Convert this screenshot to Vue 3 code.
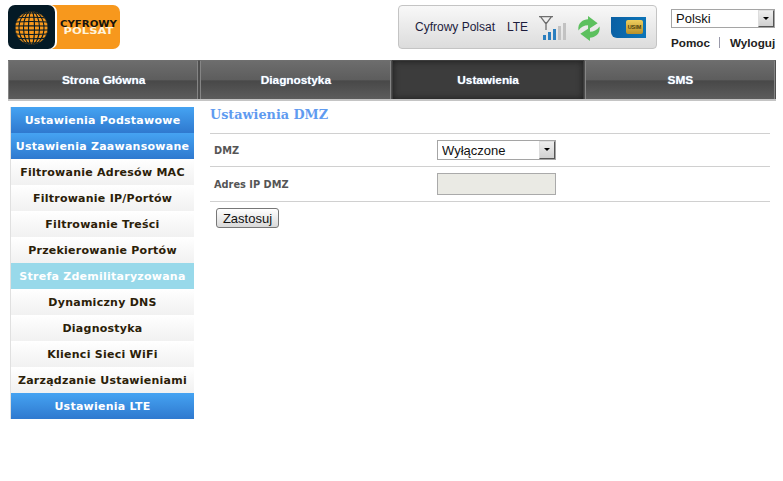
<script setup>
const tabs = [
  { label: 'Strona Główna', active: false },
  { label: 'Diagnostyka', active: false },
  { label: 'Ustawienia', active: true },
  { label: 'SMS', active: false },
]
const menu = [
  { label: 'Ustawienia Podstawowe', kind: 'blue' },
  { label: 'Ustawienia Zaawansowane', kind: 'blue' },
  { label: 'Filtrowanie Adresów MAC', kind: 'sub' },
  { label: 'Filtrowanie IP/Portów', kind: 'sub' },
  { label: 'Filtrowanie Treści', kind: 'sub' },
  { label: 'Przekierowanie Portów', kind: 'sub' },
  { label: 'Strefa Zdemilitaryzowana', kind: 'current' },
  { label: 'Dynamiczny DNS', kind: 'sub' },
  { label: 'Diagnostyka', kind: 'sub' },
  { label: 'Klienci Sieci WiFi', kind: 'sub' },
  { label: 'Zarządzanie Ustawieniami', kind: 'sub' },
  { label: 'Ustawienia LTE', kind: 'blue' },
]
const meridians = [16.5, 12.5, 8, 3]
const parallels = [-14, -10, -6, -2, 2, 6, 10, 14]
</script>

<template>
  <div class="page">
    <header class="top">
      <svg class="logo" width="112" height="44" viewBox="0 0 112 44">
        <rect x="38" y="0" width="74" height="44" rx="7" fill="#f7981d" />
        <rect x="0" y="0" width="49" height="44" rx="7" fill="#fff" />
        <rect x="0" y="0" width="47" height="44" rx="7" fill="#041a26" />
        <clipPath id="globe-clip"><circle cx="23.500" cy="23" r="16.500" /></clipPath>
        <circle cx="23.500" cy="23" r="16.500" fill="#f7981d" />
        <g clip-path="url(#globe-clip)" fill="none" stroke="#041a26" stroke-width="1.100">
          <ellipse v-for="m in meridians" :key="m" cx="23.500" cy="23" :rx="m" ry="17" />
          <path v-for="p in parallels" :key="p" :d="`M6 ${23 + p}Q23.500 ${23 + p * 1.150} 41 ${23 + p}`" />
        </g>
        <text x="80.500" y="22.300" text-anchor="middle" textLength="57" lengthAdjust="spacingAndGlyphs" class="logo-a">CYFROWY</text>
        <text x="80.500" y="29.300" text-anchor="middle" textLength="50" lengthAdjust="spacingAndGlyphs" class="logo-b">POLSAT</text>
      </svg>

      <div class="status">
        <span class="status-name">Cyfrowy Polsat</span>
        <span class="status-net">LTE</span>
        <svg class="signal" width="28" height="25" viewBox="0 0 28 25">
          <path d="M0 .7H14M1.500 .7L7 8L12.500 .7M7 6V14" fill="none" stroke="#6e6e6e" stroke-width="1.300" />
          <rect x="4" y="19" width="3" height="5" fill="#2b7fbf" />
          <rect x="9" y="16" width="3" height="8" fill="#2b7fbf" />
          <rect x="14" y="13" width="3" height="11" fill="#2b7fbf" />
          <rect x="19" y="10" width="3" height="14" fill="#c2c2c2" />
          <rect x="24" y="7" width="3" height="17" fill="#c2c2c2" />
        </svg>
        <svg class="sync" width="24" height="25" viewBox="0 0 24 26">
          <path d="M1 15C0 7 6 3.500 11 3.500V0L21 7.500L11 14V9.500C7 9.500 4 11 1 15Z" fill="#5cc05e" />
          <path d="M23 11C24 19 18 22.500 13 22.500V26L3 18.500L13 12V16.500C17 16.500 20 15 23 11Z" fill="#5cc05e" />
        </svg>
        <div class="sim">
          <span class="chip">USIM</span>
        </div>
      </div>

      <div class="side-tools">
        <div class="select-wrap lang">
          <select class="native"><option>Polski</option></select>
          <span class="arrow"></span>
        </div>
        <div class="links">
          <a>Pomoc</a><span class="sep"></span><a>Wyloguj</a>
        </div>
      </div>
    </header>

    <nav class="tabs">
      <div v-for="t in tabs" :key="t.label" class="tab" :class="{ active: t.active }">{{ t.label }}</div>
    </nav>

    <div class="body">
      <aside class="menu">
        <div v-for="m in menu" :key="m.label" class="item" :class="m.kind">{{ m.label }}</div>
      </aside>
      <main class="content">
        <h1 class="title">Ustawienia DMZ</h1>
        <div class="row first">
          <label class="lbl">DMZ</label>
          <div class="select-wrap dmz">
            <select class="native"><option>Wyłączone</option></select>
            <span class="arrow"></span>
          </div>
        </div>
        <div class="row second">
          <label class="lbl">Adres IP DMZ</label>
          <input class="field" disabled />
        </div>
        <button class="apply">Zastosuj</button>
      </main>
    </div>
  </div>
</template>

<style>
html, body { margin: 0; background: #fff; }
</style>

<style scoped>
.page { width: 783px; height: 481px; overflow: hidden; background: #fff; font-family: "Liberation Sans", Arial, sans-serif; }
.top { height: 60px; display: flex; align-items: flex-start; padding-left: 8px; box-sizing: border-box; }
.logo { margin-top: 5px; flex: none; }
.logo-a { font: 700 8px "DejaVu Sans", sans-serif; fill: #14140f; }
.logo-b { font: 700 8px "DejaVu Sans", sans-serif; fill: #fff3da; }
.status { margin: 5px 0 0 278px; width: 259px; height: 44px; box-sizing: border-box; border: 1px solid #c4c4c4; border-radius: 4px; background: linear-gradient(#f8f8f8, #dcdcdc); display: flex; align-items: center; padding-left: 16px; font-size: 12px; color: #1c1c3c; flex: none; }
.status-name { width: 80px; margin-right: 12px; white-space: nowrap; flex: none; }
.status-net { width: 22px; flex: none; }
.signal { margin-left: 10px; margin-top: 2px; flex: none; }
.sync { margin-left: 10px; margin-top: 2px; flex: none; }
.sim { margin-left: 10px; flex: none; width: 35px; height: 21px; background: linear-gradient(100deg, #0a5fa3, #0c75b8); border-radius: 0 0 0 6px; display: flex; align-items: center; justify-content: flex-end; padding-right: 3px; box-sizing: border-box; }
.chip { width: 17px; height: 14px; border-radius: 2px; background: linear-gradient(#efcf5e, #b8902a); font: 700 5.500px "Liberation Sans", sans-serif; color: #4a3c0c; text-align: center; line-height: 14px; }
.side-tools { margin-left: 14px; width: 105px; flex: none; }
.select-wrap { position: relative; box-sizing: border-box; border: 1px solid #a5a5a5; background: #fff; }
.lang { margin-top: 9px; width: 104px; height: 19px; }
.dmz { width: 119px; height: 20px; }
.native { appearance: none; border: 0; outline: 0; background: transparent; width: 100%; height: 100%; padding: 0 0 0 4px; margin: 0; font: 13px "Liberation Sans", sans-serif; color: #111; display: block; }
.arrow { position: absolute; right: 0; top: 0; bottom: 0; width: 16px; box-sizing: border-box; background: linear-gradient(#eee, #d0d0d0); border: 1px solid #777; border-color: #ddd #555 #555 #ddd; }
.arrow::after { content: ""; position: absolute; left: 4px; top: 6px; border: 3px solid transparent; border-top-color: #000; border-bottom: 0; }
.links { margin-top: 8px; display: flex; align-items: center; font: 700 11.700px "Liberation Sans", sans-serif; color: #222; white-space: nowrap; }
.sep { flex: none; width: 1px; height: 11px; background: #99a; margin: 0 10px 0 9px; }
.tabs { display: flex; width: 768px; margin-left: 8px; height: 41px; box-sizing: border-box; border-bottom: 2px solid #c4c4c4; }
.tab { flex: 1; display: flex; align-items: center; justify-content: center; box-sizing: border-box; padding-left: 1px; border-right: 1px solid #4e4e4e; border-top: 1px solid #6f6f6f; background: linear-gradient(#6d6d6d 0, #5d5d5d 50%, #484848 52%, #5c5c5c 100%); box-shadow: inset -1px 0 0 #858585, inset 1px 0 0 #858585; font: 700 11.800px "Liberation Sans", sans-serif; color: #fff; text-shadow: 0 0 1px #9cc8f0; }
.tab + .tab { border-left: 1px solid #4e4e4e; }
.tab.active { background: #3c3c3c; box-shadow: inset 0 0 6px #1c1c1c; border-color: #3c3c3c; }
.body { display: flex; padding: 6px 0 0 10px; }
.menu { width: 184px; flex: none; box-sizing: border-box; border-left: 1px solid #e0e0e0; }
.item { height: 26px; display: flex; align-items: center; justify-content: center; white-space: nowrap; font: 700 11px "DejaVu Sans", Verdana, sans-serif; letter-spacing: .25px; }
.item.blue { background: linear-gradient(#45a3f2, #2f79cf); color: #fff; }
.item.sub { background: linear-gradient(#fff, #f1f1f1); color: #2b2008; }
.item.current { background: #98d9ea; color: #fff; }
.content { width: 560px; margin-left: 16px; }
.title { margin: 0; height: 26px; font: 700 12.800px "DejaVu Serif", serif; color: #5f9bf0; line-height: 16px; }
.row { display: flex; align-items: center; border-top: 1px solid #d0d0d0; box-sizing: border-box; }
.first { height: 33px; }
.second { height: 36px; border-bottom: 1px solid #d0d0d0; }
.lbl { width: 227px; padding-left: 4px; box-sizing: border-box; font: 700 9.800px "DejaVu Sans", Verdana, sans-serif; color: #555; }
.field { width: 119px; height: 22px; box-sizing: border-box; border: 1px solid #aaa; background: #eaeae4; padding: 0; margin: 0; }
.apply { display: block; margin: 6px 0 0 6px; width: 63px; height: 20px; padding: 0; box-sizing: border-box; border: 1px solid #777; border-radius: 3px; background: linear-gradient(#fff, #d9d9d9); font: 13px "Liberation Sans", sans-serif; color: #111; }
</style>
